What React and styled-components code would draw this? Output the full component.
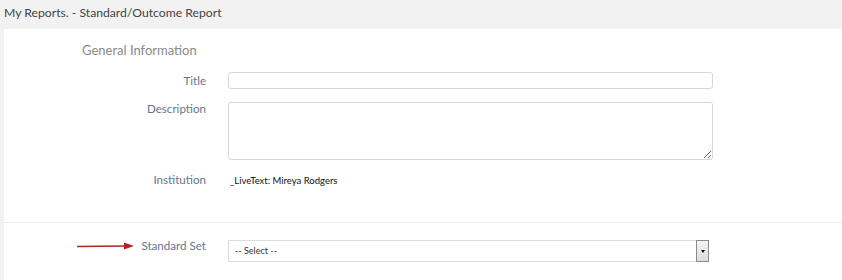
import styled, { createGlobalStyle } from "styled-components";

const Global = createGlobalStyle`
    body {
        margin: 0;
        background: #f2f2f2;
        font-family: Lato, "Open Sans", sans-serif;
    }
`

const ArrowIcon = () => (
    <svg width="60" height="8" viewBox="0 0 60 8">
        <line x1="1" y1="4.5" x2="50" y2="4" stroke="#b0242a" strokeWidth="1.6" />
        <polygon points="48,0.5 58,4 48,7.5" fill="#b0242a" />
    </svg>
)

const App = () => {
    return (
        <>
            <Global />
            <Header>My Reports. - Standard/Outcome Report</Header>
            <Panel>
                <Section>
                    <SectionTitle>General Information</SectionTitle>
                    <Row>
                        <Label>Title</Label>
                        <TextInput />
                    </Row>
                    <Row $gap={13}>
                        <Label $lift={2}>Description</Label>
                        <TextArea />
                    </Row>
                    <Row $gap={11}>
                        <Label>Institution</Label>
                        <Value>_LiveText: Mireya Rodgers</Value>
                    </Row>
                </Section>
                <Divider />
                <Section $top={16}>
                    <Row>
                        <Label $lift={2}>
                            <ArrowWrap><ArrowIcon /></ArrowWrap>
                            Standard Set
                        </Label>
                        <Select>
                            <SelectText>-- Select --</SelectText>
                            <SelectButton>
                                <Caret />
                            </SelectButton>
                        </Select>
                    </Row>
                </Section>
            </Panel>
        </>
    )
};

const Header = styled.div`
    height: 29px;
    padding-left: 4px;
    line-height: 25px;
    font-size: 12.2px;
    color: #444;
`
const Panel = styled.div`
    margin-left: 4px;
    background: white;
    height: 251px;
`
const Section = styled.div`
    padding-top: ${p => p.$top || 12}px;
    display: flex;
    flex-direction: column;
`
const SectionTitle = styled.div`
    padding-left: 78px;
    font-size: 13px;
    color: #8a8a8a;
    height: 20px;
    line-height: 18px;
    margin-bottom: 11px;
`
const Row = styled.div`
    display: grid;
    grid-template-columns: 202px 485px;
    column-gap: 22px;
    align-items: start;
    margin-top: ${p => p.$gap || 0}px;
`
const Label = styled.div`
    position: relative;
    text-align: right;
    font-size: 11.6px;
    color: #66758f;
    line-height: 15px;
    padding-top: 1px;
    margin-top: ${p => -(p.$lift || 0)}px;
`
const ArrowWrap = styled.span`
    position: absolute;
    left: 72px;
    top: 1px;
`
const TextInput = styled.input`
    box-sizing: border-box;
    width: 485px;
    height: 17px;
    border: 1px solid #d6d6d6;
    border-radius: 3px;
    margin: 0;
`
const TextArea = styled.textarea`
    box-sizing: border-box;
    width: 485px;
    height: 58px;
    border: 1px solid #d6d6d6;
    border-radius: 3px;
    margin: 0;
    resize: vertical;
`
const Value = styled.div`
    font-size: 9.5px;
    color: #111;
    padding-left: 2px;
    line-height: 15px;
    padding-top: 2px;
`
const Divider = styled.div`
    margin-top: 34px;
    height: 1px;
    background: #ececec;
`
const Select = styled.div`
    box-sizing: border-box;
    width: 481px;
    height: 22px;
    margin-top: 1px;
    border: 1px solid #dcdcdc;
    display: flex;
    align-items: stretch;
`
const SelectText = styled.div`
    flex: 1;
    font-size: 9px;
    color: #333;
    line-height: 20px;
    padding-left: 6px;
`
const SelectButton = styled.div`
    width: 11px;
    border: 1px solid #8c8c8c;
    margin: -1px -1px -1px 0;
    background: linear-gradient(#f4f4f4, #dcdcdc);
    display: flex;
    align-items: center;
    justify-content: center;
`
const Caret = styled.span`
    width: 0;
    height: 0;
    border-left: 2.5px solid transparent;
    border-right: 2.5px solid transparent;
    border-top: 3px solid #111;
`

export default App;
